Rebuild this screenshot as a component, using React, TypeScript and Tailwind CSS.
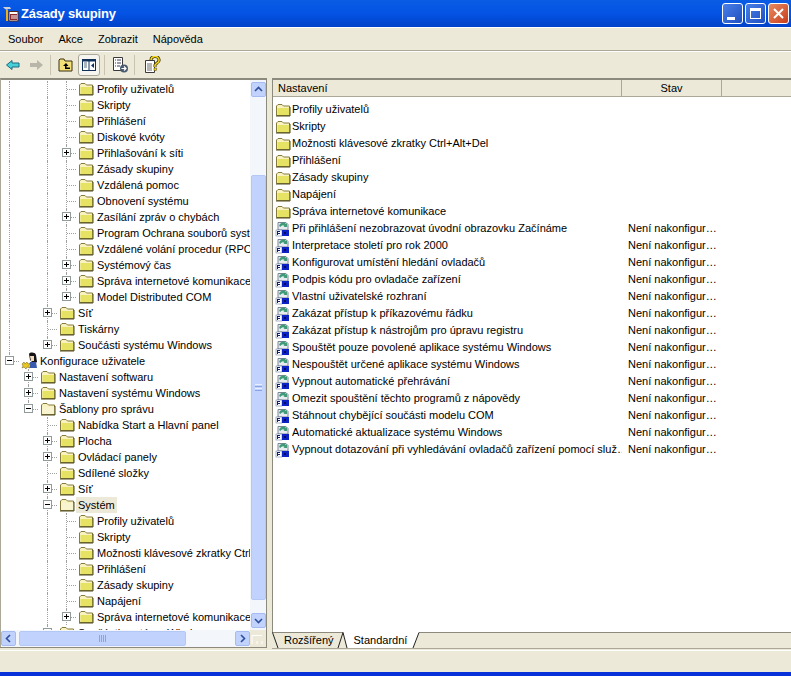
const FONT = "font-['Liberation_Sans',Arial,sans-serif]";

function Folder({ open }: { open?: boolean }) {
  return (
    <svg width="16" height="16" viewBox="0 0 16 16" className="shrink-0">
      <path d="M1.500 13.500V4l1.500-1.500h4L8.500 4h6v9.500z" fill="#f8f2c0" stroke="#857a3c" />
      <path d="M2.500 6h12v7h-12z" fill={open ? "#f8f4d0" : "#e6e264"} />
      <path d="M1 14h14V5" fill="none" stroke="#4f4a1c" />
    </svg>
  );
}

function PolicyIcon() {
  return (
    <svg width="16" height="16" viewBox="0 0 16 16" className="shrink-0">
      <path d="M3 1.500h8l2 2V9H3z" fill="#e8ecf0" stroke="#7a8694" />
      <path d="M4 5a4 4 0 0 1 7-2l1-1v4H8.500l1-1a2.500 2.500 0 0 0-4 1z" fill="#3f9a78" />
      <rect x="1" y="9" width="6" height="6" fill="#fff" stroke="#5a6a8a" strokeWidth="0.500" />
      <path d="M2 10h3v1H3v1h2v1H3v1h-1z" fill="#10206a" />
      <rect x="7" y="9" width="7" height="6" fill="#0c22c4" />
      <rect x="9" y="11" width="2" height="2" fill="#000a60" />
    </svg>
  );
}

function UserIcon() {
  return (
    <span className="block w-4 h-[18px] relative shrink-0">
      <svg width="18" height="18" viewBox="0 0 18 18" className="absolute left-0 top-0">
        <path d="M8 2c1-2 6-2 7 1l1 7-3 2-4-4z" fill="#141414" />
        <path d="M9 4h4v5h-3z" fill="#f2d8bc" />
        <path d="M9 10h6l1 6H9z" fill="#3a5ab0" />
        <path d="M1 12l2-2 1 2 2-2 1 2 2-1-1 3 1 2-3-1-1 2-2-2-2 1 1-2z" fill="#e8c820" stroke="#6a5a10" strokeWidth="0.500" />
      </svg>
    </span>
  );
}

function Expander({ open }: { open?: boolean }) {
  return (
    <span className="absolute left-[5px] top-[3px] w-[9px] h-[9px] border border-[#919b9c] bg-white flex items-center justify-center">
      <span className="relative w-[5px] h-[5px] block">
        <span className="absolute left-0 top-[2px] w-[5px] h-px bg-black" />
        {!open && <span className="absolute left-[2px] top-0 w-px h-[5px] bg-black" />}
      </span>
    </span>
  );
}

type TreeRowData = {
  label: string;
  guides: number[];
  col: number;
  exp?: "plus" | "minus";
  last?: boolean;
  icon?: "user";
  open?: boolean;
  selected?: boolean;
};

const top = [0, 2];
const treeRows: TreeRowData[] = [
  { label: "Profily uživatelů", guides: top, col: 3 },
  { label: "Skripty", guides: top, col: 3 },
  { label: "Přihlášení", guides: top, col: 3 },
  { label: "Diskové kvóty", guides: top, col: 3 },
  { label: "Přihlašování k síti", guides: top, col: 3, exp: "plus" },
  { label: "Zásady skupiny", guides: top, col: 3 },
  { label: "Vzdálená pomoc", guides: top, col: 3 },
  { label: "Obnovení systému", guides: top, col: 3 },
  { label: "Zasílání zpráv o chybách", guides: top, col: 3, exp: "plus" },
  { label: "Program Ochrana souborů systému", guides: top, col: 3 },
  { label: "Vzdálené volání procedur (RPC)", guides: top, col: 3 },
  { label: "Systémový čas", guides: top, col: 3, exp: "plus" },
  { label: "Správa internetové komunikace", guides: top, col: 3, exp: "plus" },
  { label: "Model Distributed COM", guides: top, col: 3, exp: "plus", last: true },
  { label: "Síť", guides: [0], col: 2, exp: "plus" },
  { label: "Tiskárny", guides: [0], col: 2 },
  { label: "Součásti systému Windows", guides: [0], col: 2, exp: "plus", last: true },
  { label: "Konfigurace uživatele", guides: [], col: 0, exp: "minus", last: true, icon: "user" },
  { label: "Nastavení softwaru", guides: [], col: 1, exp: "plus" },
  { label: "Nastavení systému Windows", guides: [], col: 1, exp: "plus" },
  { label: "Šablony pro správu", guides: [], col: 1, exp: "minus", last: true, open: true },
  { label: "Nabídka Start a Hlavní panel", guides: [], col: 2 },
  { label: "Plocha", guides: [], col: 2, exp: "plus" },
  { label: "Ovládací panely", guides: [], col: 2, exp: "plus" },
  { label: "Sdílené složky", guides: [], col: 2 },
  { label: "Síť", guides: [], col: 2, exp: "plus" },
  { label: "Systém", guides: [], col: 2, exp: "minus", open: true, selected: true },
  { label: "Profily uživatelů", guides: [2], col: 3 },
  { label: "Skripty", guides: [2], col: 3 },
  { label: "Možnosti klávesové zkratky Ctrl+Alt+Del", guides: [2], col: 3 },
  { label: "Přihlášení", guides: [2], col: 3 },
  { label: "Zásady skupiny", guides: [2], col: 3 },
  { label: "Napájení", guides: [2], col: 3 },
  { label: "Správa internetové komunikace", guides: [2], col: 3, exp: "plus" },
  { label: "Součásti systému Windows", guides: [], col: 2, exp: "plus" },
];

function TreeRow({ row }: { row: TreeRowData }) {
  const cols = [0, 1, 2, 3].slice(0, row.col);
  return (
    <div className="flex items-center h-4 whitespace-nowrap">
      {cols.map((c) => (
        <span key={c} className="relative block w-[19px] h-4 shrink-0">
          {row.guides.includes(c) && (
            <span className="absolute left-[9px] top-0 h-4 border-l border-dotted border-[#a0a0a0]" />
          )}
        </span>
      ))}
      <span className="relative block w-[19px] h-4 shrink-0">
        <span className={"absolute left-[9px] top-0 border-l border-dotted border-[#a0a0a0] " + (row.last ? "h-2" : "h-4")} />
        <span className="absolute left-[10px] top-2 w-[9px] border-t border-dotted border-[#a0a0a0]" />
        {row.exp && <Expander open={row.exp === "minus"} />}
      </span>
      <span className="ml-[2px] flex items-center">
        {row.icon === "user" ? <UserIcon /> : <Folder open={row.open} />}
      </span>
      <span className={"ml-[1px] px-[2px] leading-4 " + (row.selected ? "bg-[#ece9d8]" : "")}>{row.label}</span>
    </div>
  );
}

function ArrowBtn({ d }: { d: string }) {
  return (
    <span className="block w-[15px] h-[15px] rounded-[2px] bg-[#c1d2fc] border border-[#a6bbf0] flex items-center justify-center shrink-0">
      <svg width="9" height="9" viewBox="0 0 9 9">
        <path d={d} fill="none" stroke="#2d4f9c" strokeWidth="1.600" />
      </svg>
    </span>
  );
}

const listFolders = [
  "Profily uživatelů",
  "Skripty",
  "Možnosti klávesové zkratky Ctrl+Alt+Del",
  "Přihlášení",
  "Zásady skupiny",
  "Napájení",
  "Správa internetové komunikace",
];

const listPolicies = [
  "Při přihlášení nezobrazovat úvodní obrazovku Začínáme",
  "Interpretace století pro rok 2000",
  "Konfigurovat umístění hledání ovladačů",
  "Podpis kódu pro ovladače zařízení",
  "Vlastní uživatelské rozhraní",
  "Zakázat přístup k příkazovému řádku",
  "Zakázat přístup k nástrojům pro úpravu registru",
  "Spouštět pouze povolené aplikace systému Windows",
  "Nespouštět určené aplikace systému Windows",
  "Vypnout automatické přehrávání",
  "Omezit spouštění těchto programů z nápovědy",
  "Stáhnout chybějící součásti modelu COM",
  "Automatické aktualizace systému Windows",
  "Vypnout dotazování při vyhledávání ovladačů zařízení pomocí služ…",
];

export default function App() {
  return (
    <div className={FONT + " w-[791px] h-[676px] overflow-hidden flex flex-col bg-[#ece9d8] text-[11px] text-black"}>
      {/* title bar */}
      <div className="h-[27px] shrink-0 flex items-center bg-gradient-to-b from-[#0a5ce4] via-[#0453e4] to-[#0242c8] pl-[3px] pr-[2px]">
        <svg width="16" height="16" viewBox="0 0 16 16" className="shrink-0">
          <path d="M0 1h7l1 2H5L4 4 2 3z" fill="#d0d0d0" />
          <rect x="3" y="4" width="2" height="11" fill="#e8b020" />
          <rect x="6" y="5.500" width="9" height="9.500" fill="#fff" stroke="#5a2a10" />
          <rect x="7" y="8" width="7" height="6" fill="#8a2a2a" />
          <path d="M9 9v4M11 9v4M13 9v4" stroke="#fff" />
        </svg>
        <span className="ml-[2px] text-white font-bold text-[13px] tracking-[-0.2px]">Zásady skupiny</span>
        <div className="ml-auto flex gap-[2px]">
          <span className="relative block w-[21px] h-[21px] rounded-[3px] border border-white bg-gradient-to-br from-[#4a7fe8] to-[#1f4fc0]">
            <span className="absolute left-[4px] bottom-[3px] w-[8px] h-[3px] bg-white" />
          </span>
          <span className="relative block w-[21px] h-[21px] rounded-[3px] border border-white bg-gradient-to-br from-[#4a7fe8] to-[#1f4fc0]">
            <span className="absolute left-[4px] top-[4px] w-[11px] h-[11px] border border-white border-t-[3px]" />
          </span>
          <span className="block w-[21px] h-[21px] rounded-[3px] border border-white bg-gradient-to-br from-[#e88a60] to-[#c83a18] flex items-center justify-center">
            <svg width="13" height="13" viewBox="0 0 13 13">
              <path d="M2 2l9 9M11 2l-9 9" stroke="#fff" strokeWidth="2" />
            </svg>
          </span>
        </div>
      </div>

      {/* menu */}
      <div className="h-[24px] shrink-0 flex items-center border-t border-white border-b border-b-[#aca899] pl-[8px] gap-[15px]">
        <span>Soubor</span>
        <span>Akce</span>
        <span>Zobrazit</span>
        <span>Nápověda</span>
      </div>

      {/* toolbar */}
      <div className="h-[27px] shrink-0 flex items-center border-t border-white pl-[5px]">
        <svg width="16" height="16" viewBox="0 0 16 16">
          <path d="M1.500 8l5.500-4.500V6h7v4H7v2.500z" fill="#48d0d8" stroke="#1a6a80" />
        </svg>
        <svg width="16" height="16" viewBox="0 0 16 16" className="ml-[7px]">
          <path d="M15 8l-6-5v3H2v4h7v3z" fill="#b8b6a8" />
        </svg>
        <span className="ml-[6px] h-[20px] border-l border-[#c8c4b0]" />
        <svg width="16" height="16" viewBox="0 0 16 16" className="ml-[7px]">
          <path d="M1 14V3l1-1h4l1 2h7v10z" fill="#f4e078" stroke="#3a3010" />
          <path d="M8 6L5 9h2v3h5v-1.500H8.500V9h2z" fill="#000" />
        </svg>
        <span className="ml-[4px] w-[22px] h-[22px] rounded-[3px] border border-[#aaa89a] bg-[#f6f5ef] flex items-center justify-center">
          <svg width="16" height="16" viewBox="0 0 16 16">
            <rect x="1.500" y="2.500" width="13" height="11" fill="#fff" stroke="#10305a" />
            <rect x="1.500" y="2.500" width="13" height="2" fill="#10305a" />
            <path d="M8 3v10" stroke="#10305a" />
            <path d="M3 6h3M3 8h3M3 10h3" stroke="#5a6a80" />
            <path d="M13 6l-3 2.500 3 2.500z" fill="#10305a" />
          </svg>
        </span>
        <span className="ml-[4px] h-[20px] border-l border-[#c8c4b0]" />
        <svg width="18" height="18" viewBox="0 0 18 18" className="ml-[6px]">
          <path d="M2.500 1.500h9v13h-9z" fill="#fff" stroke="#3a3a3a" />
          <path d="M4 4h1M6 4h4M4 7h1M6 7h4M4 10h1M6 10h3" stroke="#3a3a5a" />
          <circle cx="13" cy="12.500" r="4" fill="#4a5a70" />
          <path d="M10.500 12.500H15M13 10.500l2 2-2 2" fill="none" stroke="#fff" strokeWidth="1.200" />
        </svg>
        <span className="ml-[5px] h-[20px] border-l border-[#c8c4b0]" />
        <svg width="18" height="18" viewBox="0 0 18 18" className="ml-[8px]">
          <path d="M2.500 4.500h9v12h-9z" fill="#fff" stroke="#3a3a3a" />
          <path d="M4 8h5M4 10h5M4 12h5M4 14h5" stroke="#6a6a6a" />
          <path d="M8 4a4 3.500 0 1 1 6 3l-2 2v2" fill="none" stroke="#3a3000" strokeWidth="3" />
          <path d="M8 4a4 3.500 0 1 1 6 3l-2 2v2" fill="none" stroke="#f4d820" strokeWidth="1.500" />
          <rect x="11" y="12" width="2.500" height="2.500" fill="#f4d820" stroke="#3a3000" strokeWidth="0.500" />
        </svg>
      </div>

      {/* panes */}
      <div className="flex-1 min-h-0 flex">
        {/* left pane */}
        <div className="w-[267px] shrink-0 flex flex-col">
          <div className="flex-1 min-h-0 flex flex-col border-t-2 border-l border-r border-t-[#8c8a7c] border-l-[#aca899] border-r-[#8c8a7c] bg-white">
            <div className="flex-1 min-h-0 flex">
              <div className="flex-1 min-w-0 overflow-hidden pt-[1px] -ml-px">
                {treeRows.map((row, i) => (
                  <TreeRow key={i} row={row} />
                ))}
              </div>
              {/* vertical scrollbar */}
              <div className="w-[16px] shrink-0 flex flex-col items-center bg-[#f3f6fb] pt-[2px] pb-[2px]">
                <ArrowBtn d="M1 6l3.500-3.500L8 6" />
                <div className="h-[78px] shrink-0" />
                <div className="flex-1 w-[15px] rounded-[2px] bg-[#c1d2fc] border border-[#b4c8f6] flex flex-col items-center justify-center gap-px">
                  <span className="w-[7px] h-px bg-[#e8eefc]" />
                  <span className="w-[7px] h-px bg-[#8aa4e0]" />
                  <span className="w-[7px] h-px bg-[#e8eefc]" />
                  <span className="w-[7px] h-px bg-[#8aa4e0]" />
                </div>
                <div className="h-[13px] shrink-0" />
                <ArrowBtn d="M1 3l3.500 3.500L8 3" />
              </div>
            </div>
            {/* horizontal scrollbar */}
            <div className="h-[17px] shrink-0 flex items-center bg-[#f3f6fb]">
              <ArrowBtn d="M6 1L2.500 4.500 6 8" />
              <div className="ml-[3px] w-[167px] h-[15px] rounded-[2px] bg-[#c1d2fc] border border-[#b4c8f6] flex items-center justify-center gap-px">
                <span className="w-px h-[7px] bg-[#8aa4e0]" />
                <span className="w-px h-[7px] bg-[#8aa4e0]" />
                <span className="w-px h-[7px] bg-[#8aa4e0]" />
                <span className="w-px h-[7px] bg-[#8aa4e0]" />
              </div>
              <div className="flex-1" />
              <ArrowBtn d="M3 1l3.500 3.500L3 8" />
              <svg width="16" height="17" viewBox="0 0 16 17" className="shrink-0 bg-[#ece9d8]">
                <path d="M2 5.500H12M2 5.500V14M12 14V11M7 14V11" stroke="#fff" fill="none" />
              </svg>
            </div>
          </div>
          <div className="h-[3px] shrink-0 border-t border-[#8c8a7c]" />
        </div>

        {/* splitter */}
        <div className="w-[5px] shrink-0" />

        {/* right pane */}
        <div className="flex-1 min-w-0 flex flex-col border-t-2 border-t-[#8c8a7c]">
          <div className="flex-1 min-h-0 bg-white border-l border-l-[#8c8a7c] flex flex-col">
            <div className="h-[17px] shrink-0 flex bg-[#ece9d8] border-b border-[#aca899]">
              <div className="w-[349px] pl-[5px] leading-[16px] border-r border-[#aca899]">Nastavení</div>
              <div className="w-[100px] text-center leading-[16px] border-r border-[#aca899]">Stav</div>
            </div>
            <div className="pt-[4px]">
              {listFolders.map((label) => (
                <div key={label} className="h-[17px] flex items-center pl-[2px] whitespace-nowrap">
                  <Folder />
                  <span className="ml-px">{label}</span>
                </div>
              ))}
              {listPolicies.map((label) => (
                <div key={label} className="h-[17px] flex items-center pl-[2px] whitespace-nowrap">
                  <PolicyIcon />
                  <span className="ml-px w-[330px] shrink-0 overflow-hidden">{label}</span>
                  <span className="ml-[6px]">Není nakonfigur…</span>
                </div>
              ))}
            </div>
          </div>
          {/* tabs */}
          <div className="relative h-[18px] shrink-0 flex items-start bg-[#ece9d8] leading-[17px]">
            <svg width="519" height="18" viewBox="0 0 519 18" className="absolute left-0 top-0">
              <path d="M0 0H519V16H0z" fill="#ece9d8" />
              <path d="M71 0H147L141 16H75z" fill="#fff" />
              <path d="M0 0.500H71M147 0.500H519" stroke="#8c8a7c" fill="none" />
              <path d="M0.500 0.500L6 16M66 16L71 0.500L75 16M141 16L147 0.500" stroke="#222" fill="none" />
              <path d="M0 16.500H519" stroke="#aca899" fill="none" />
            </svg>
            <span className="relative ml-[12px] whitespace-nowrap">Rozšířený</span>
            <span className="relative ml-[20px] whitespace-nowrap">Standardní</span>
          </div>
        </div>
      </div>

      {/* status bar */}
      <div className="h-[22px] shrink-0 border-t border-[#ffffff] bg-[#ece9d8]" />
      <div className="h-[4px] shrink-0 bg-[#0831d9]" />
    </div>
  );
}
